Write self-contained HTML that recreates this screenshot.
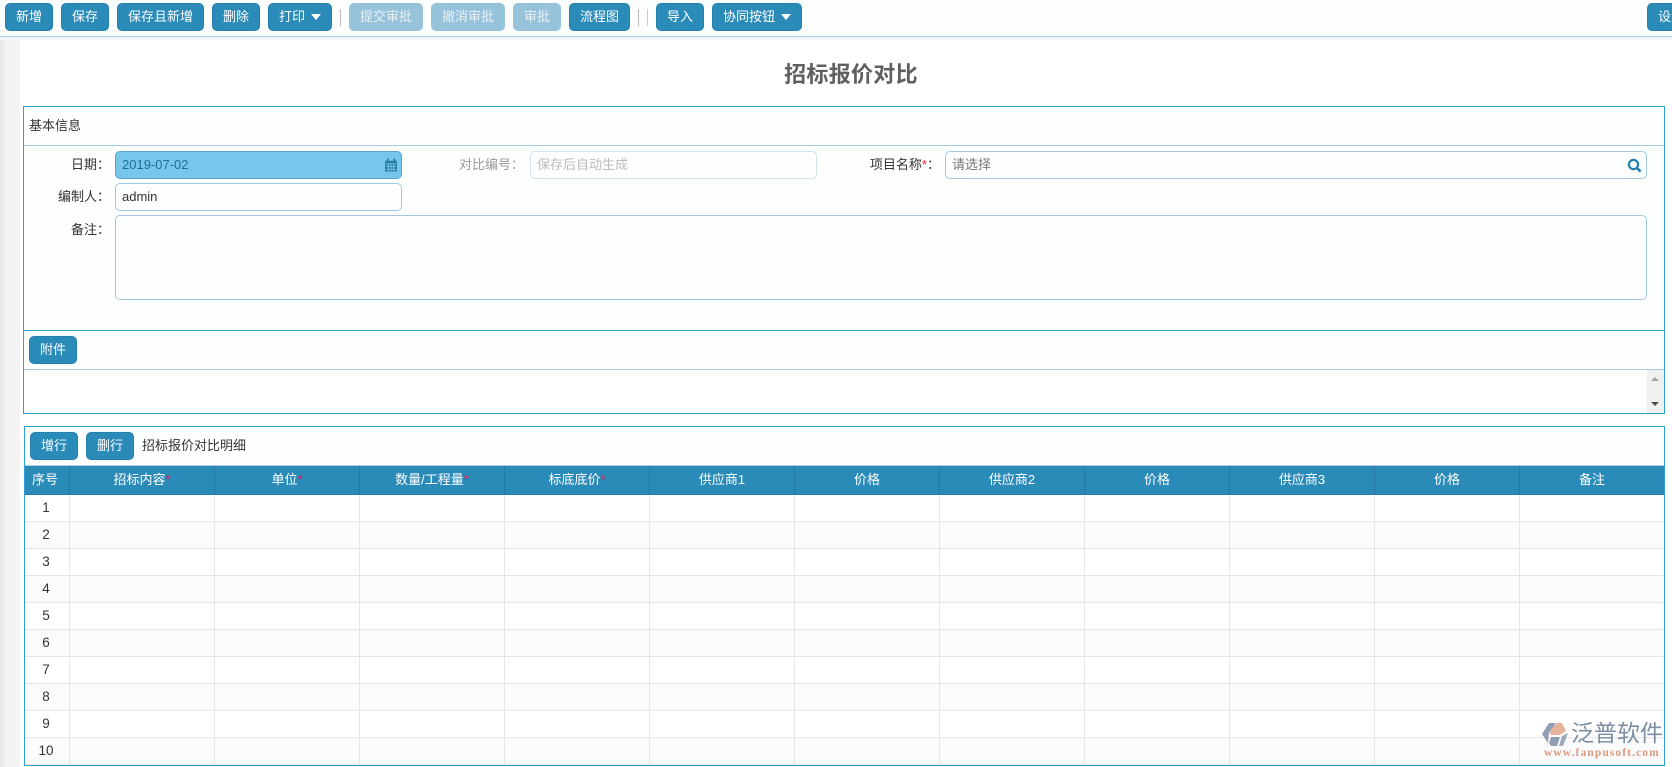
<!DOCTYPE html>
<html lang="zh"><head><meta charset="utf-8"><title>招标报价对比</title>
<style>
*{box-sizing:border-box;margin:0;padding:0}
html,body{width:1672px;height:767px;overflow:hidden;background:#fff}
body{position:relative;font:13px/1.2 "Liberation Sans","Noto Sans CJK SC",sans-serif;color:#333}
.a{position:absolute}
.b{position:absolute;top:3px;height:28px;background:#2a8ab8;color:#fff;border-radius:5px;border:1px solid #2580ad;text-align:center;line-height:25px;font-size:13px;white-space:nowrap}
.d{background:#96c3da;border-color:#96c3da;color:#e6f1f6}
.c{display:inline-block;width:0;height:0;border-left:5.5px solid transparent;border-right:5.5px solid transparent;border-top:6px solid #fff;margin-left:6px;vertical-align:1px}
.s{position:absolute;top:9px;width:1px;height:17px;background:#bbb}
.i{position:absolute;height:28px;border:1px solid #a5c8e1;border-radius:5px;background:#fdfefe;line-height:25px;padding-left:6px}
.l{position:absolute;text-align:right;height:18px;line-height:18px;white-space:nowrap}
.ln{position:absolute;height:1px;background:#a9c9df}
.th{position:absolute;top:466px;height:29px;background:#2a8ab8;color:#fff;text-align:center;line-height:27px;border-right:1px solid #2479a6;border-bottom:1px solid #2479a6;white-space:nowrap}
.th i{color:#e8205a;font-style:normal}
.r{position:absolute;left:25px;width:1639px;height:27px;border-bottom:1px solid #e6e6e6}
.n{position:absolute;left:24px;width:44px;height:26px;line-height:26px;text-align:center;font-size:13.5px}
.v{position:absolute;top:495px;width:1px;height:270px;background:#e6e6e6}
</style></head><body>

<!-- left gutter -->
<div class="a" style="left:0;top:37px;width:20px;height:730px;background:linear-gradient(90deg,#e6e6e6 0,#ececec 3px,#f3f3f3 6px,#f4f4f4 100%)"></div>
<div class="a" style="left:0;top:37px;width:1672px;height:3px;background:#f4f4f4"></div>

<!-- toolbar -->
<div class="a" style="left:0;top:0;width:1672px;height:37px;background:#fdfefe;border-bottom:1px solid #a5cbe3"></div>
<div class="b" style="left:5px;width:48px">新增</div>
<div class="b" style="left:61px;width:48px">保存</div>
<div class="b" style="left:117px;width:87px">保存且新增</div>
<div class="b" style="left:212px;width:48px">删除</div>
<div class="b" style="left:268px;width:64px">打印<span class="c"></span></div>
<div class="s" style="left:340px"></div>
<div class="b d" style="left:349px;width:74px">提交审批</div>
<div class="b d" style="left:431px;width:74px">撤消审批</div>
<div class="b d" style="left:513px;width:48px">审批</div>
<div class="b" style="left:569px;width:61px">流程图</div>
<div class="s" style="left:638px"></div>
<div class="s" style="left:647px;background:#ccc"></div>
<div class="b" style="left:656px;width:48px">导入</div>
<div class="b" style="left:712px;width:90px">协同按钮<span class="c"></span></div>
<div class="b" style="left:1647px;width:40px;text-align:left;padding-left:10px">设置</div>

<!-- title -->
<div class="a" style="left:20px;width:1652px;top:60px;text-align:center;font-size:22px;font-weight:bold;line-height:30px;color:#5f5f5f;padding-left:10px;letter-spacing:.3px">招标报价对比</div>

<!-- panel 1 -->
<div class="a" style="left:23px;top:106px;width:1642px;height:308px;border:1px solid #2ea1d3;background:#fdfefe"></div>
<div class="a" style="left:29px;top:117px;height:18px;line-height:18px">基本信息</div>
<div class="ln" style="left:24px;top:145px;width:1640px"></div>

<div class="l" style="left:30px;width:80px;top:156px">日期：</div>
<div class="i" style="left:115px;top:151px;width:287px;background:#77c6ec;border-color:#5aa3cc;color:#1f6f9c">2019-07-02
<svg class="a" style="left:268px;top:6px" width="14" height="14" viewBox="0 0 13 13"><path d="M1 2.5h11v10H1z" fill="#2a7ba6"/><path d="M2 5.5h9M2 8h9M2 10.5h9M4 5v7M6.5 5v7M9 5v7" stroke="#77c6ec" stroke-width=".8"/><path d="M3.5 .5v3M9.5 .5v3" stroke="#2a7ba6" stroke-width="1.6"/></svg></div>
<div class="l" style="left:446px;width:78px;top:156px;color:#999">对比编号：</div>
<div class="i" style="left:530px;top:151px;width:287px;border-color:#d3e2ee;color:#bbb">保存后自动生成</div>
<div class="l" style="left:856px;width:84px;top:156px">项目名称<span style="color:#e8203a">*</span>：</div>
<div class="i" style="left:945px;top:151px;width:702px;color:#777">请选择
<svg class="a" style="left:681px;top:6px" width="15" height="15" viewBox="0 0 15 15"><circle cx="6.5" cy="6.5" r="4.6" fill="none" stroke="#1f7fb0" stroke-width="2.2"/><path d="M10 10l3.6 3.6" stroke="#1f7fb0" stroke-width="2.6"/></svg></div>
<div class="l" style="left:30px;width:80px;top:188px">编制人：</div>
<div class="i" style="left:115px;top:183px;width:287px;color:#333">admin</div>
<div class="l" style="left:30px;width:80px;top:221px">备注：</div>
<div class="i" style="left:115px;top:215px;width:1532px;height:85px"></div>

<div class="a" style="left:24px;top:330px;width:1640px;height:1px;background:#2ea1d3"></div>
<div class="b" style="left:29px;top:336px;width:48px">附件</div>
<div class="ln" style="left:24px;top:369px;width:1640px"></div>
<div class="a" style="left:24px;top:370px;width:1640px;height:43px;background:#fff"></div>
<div class="a" style="left:1647px;top:370px;width:17px;height:43px;background:#f0f0f0"></div>
<div class="a" style="left:1651px;top:377px;border-left:4px solid transparent;border-right:4px solid transparent;border-bottom:4px solid #a3a3a3"></div>
<div class="a" style="left:1651px;top:402px;border-left:4px solid transparent;border-right:4px solid transparent;border-top:4px solid #505050"></div>

<!-- panel 2 -->
<div class="a" style="left:24px;top:426px;width:1641px;height:340px;border:1px solid #2ea1d3;background:#fdfefe"></div>
<div class="b" style="left:30px;top:432px;width:48px">增行</div>
<div class="b" style="left:86px;top:432px;width:48px">删行</div>
<div class="a" style="left:142px;top:437px;height:18px;line-height:18px">招标报价对比明细</div>
<div class="ln" style="left:25px;top:465px;width:1639px;background:#b9cfdd"></div>

<div class="th" style="left:25px;width:45px;padding-right:4px">序号</div>
<div class="th" style="left:70px;width:145px">招标内容<i>*</i></div>
<div class="th" style="left:215px;width:145px">单位<i>*</i></div>
<div class="th" style="left:360px;width:145px">数量/工程量<i>*</i></div>
<div class="th" style="left:505px;width:145px">标底底价<i>*</i></div>
<div class="th" style="left:650px;width:145px">供应商1</div>
<div class="th" style="left:795px;width:145px">价格</div>
<div class="th" style="left:940px;width:145px">供应商2</div>
<div class="th" style="left:1085px;width:145px">价格</div>
<div class="th" style="left:1230px;width:145px">供应商3</div>
<div class="th" style="left:1375px;width:145px">价格</div>
<div class="th" style="left:1520px;width:144px;border-right:0">备注</div>

<div class="r" style="top:495px;background:#fff"></div>
<div class="r" style="top:522px;background:#fbfbfb"></div>
<div class="r" style="top:549px;background:#fff"></div>
<div class="r" style="top:576px;background:#fbfbfb"></div>
<div class="r" style="top:603px;background:#fff"></div>
<div class="r" style="top:630px;background:#fbfbfb"></div>
<div class="r" style="top:657px;background:#fff"></div>
<div class="r" style="top:684px;background:#fbfbfb"></div>
<div class="r" style="top:711px;background:#fff"></div>
<div class="r" style="top:738px;background:#fbfbfb"></div>

<div class="v" style="left:69px"></div><div class="v" style="left:214px"></div><div class="v" style="left:359px"></div><div class="v" style="left:504px"></div><div class="v" style="left:649px"></div><div class="v" style="left:794px"></div><div class="v" style="left:939px"></div><div class="v" style="left:1084px"></div><div class="v" style="left:1229px"></div><div class="v" style="left:1374px"></div><div class="v" style="left:1519px"></div>

<div class="n" style="top:495px">1</div>
<div class="n" style="top:522px">2</div>
<div class="n" style="top:549px">3</div>
<div class="n" style="top:576px">4</div>
<div class="n" style="top:603px">5</div>
<div class="n" style="top:630px">6</div>
<div class="n" style="top:657px">7</div>
<div class="n" style="top:684px">8</div>
<div class="n" style="top:711px">9</div>
<div class="n" style="top:738px">10</div>

<!-- watermark logo -->
<svg class="a" style="left:1542px;top:722px;opacity:.85" width="27" height="25" viewBox="0 0 27 25">
<path d="M7 1h7L7 11l-1 10-6-9z" fill="#7d8fa8"/>
<path d="M15 1h5l4 8-6 4H8l1-6z" fill="#e3a68a"/>
<path d="M9 15h9l-3 9H9l-2-3z" fill="#7d8fa8"/>
<path d="M20 14l6-3-5 13h-4z" fill="#8d9db3"/>
</svg>
<div class="a" style="left:1571px;top:719px;width:96px;font-size:23px;line-height:28px;color:#6f829b;white-space:nowrap;opacity:.9">泛普软件</div>
<div class="a" style="left:1544px;top:747px;font:bold 11.5px/12px 'Liberation Serif',serif;color:#d98f73;letter-spacing:1.1px;white-space:nowrap;opacity:.9">www.fanpusoft.com</div>

</body></html>
